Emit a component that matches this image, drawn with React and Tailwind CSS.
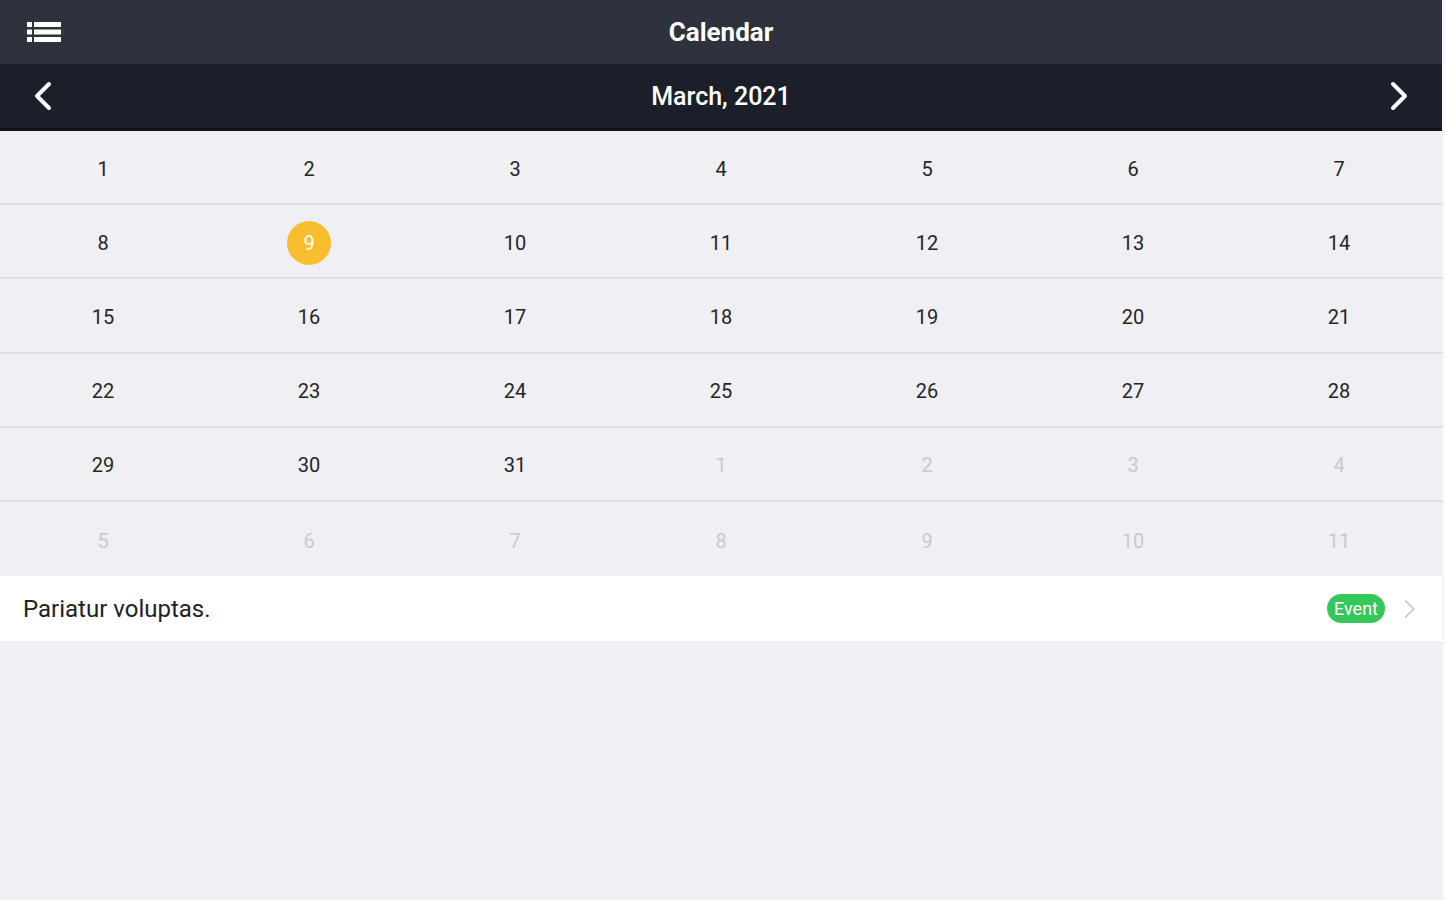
const weeks = [
  [1, 2, 3, 4, 5, 6, 7],
  [8, 9, 10, 11, 12, 13, 14],
  [15, 16, 17, 18, 19, 20, 21],
  [22, 23, 24, 25, 26, 27, 28],
  [29, 30, 31, "n1", "n2", "n3", "n4"],
  ["n5", "n6", "n7", "n8", "n9", "n10", "n11"],
];

const SELECTED = 9;

const MenuIcon = () => (
  <svg width="34" height="24" viewBox="0 0 34 24" fill="#fff">
    <rect x="0" y="2" width="5" height="5" />
    <rect x="7" y="2" width="27" height="5" />
    <rect x="0" y="9.5" width="5" height="5" />
    <rect x="7" y="9.5" width="27" height="5" />
    <rect x="0" y="17" width="5" height="5" />
    <rect x="7" y="17" width="27" height="5" />
  </svg>
);

const Chevron = ({ dir = "left", color = "#fff", size = 30, stroke = 4 }) => (
  <svg width={size * 0.7} height={size} viewBox="0 0 21 30" fill="none">
    <path
      d={dir === "left" ? "M17 3 L5 15 L17 27" : "M4 3 L16 15 L4 27"}
      stroke={color}
      strokeWidth={stroke}
      strokeLinecap="round"
      strokeLinejoin="round"
    />
  </svg>
);

const DayCell = ({ value }) => {
  const isNext = typeof value === "string";
  const label = isNext ? value.slice(1) : value;
  const selected = value === SELECTED;
  return (
    <div className="flex items-center justify-center pt-[3px]">
      {selected ? (
        <span className="flex h-[44px] w-[44px] items-center justify-center rounded-full bg-[#f7bf2e] text-[20px] text-white">
          {label}
        </span>
      ) : (
        <span
          className={`text-[20px] ${isNext ? "text-[#c9c9ce]" : "text-[#262626]"}`}
        >
          {label}
        </span>
      )}
    </div>
  );
};

export default function App() {
  return (
    <div
      className="flex min-h-[900px] bg-[#f7f7f9]"
      style={{ fontFamily: "Roboto, 'Liberation Sans', sans-serif" }}
    >
      <div className="flex w-[1442px] flex-col bg-[#efeff4]">
        {/* Title bar */}
        <header className="flex h-[64px] items-center bg-[#2e323c] px-[27px]">
          <div className="w-[60px]">
            <MenuIcon />
          </div>
          <h1 className="flex-1 text-center text-[26px] font-bold text-white">
            Calendar
          </h1>
          <div className="w-[60px]" />
        </header>

        {/* Month bar */}
        <div className="flex h-[67px] items-center border-b-[3px] border-[#11141b] bg-[#1b1f29] pl-[32px] pr-[32px]">
          <button className="w-[60px]">
            <Chevron dir="left" />
          </button>
          <div className="flex-1 pt-[2px] text-center text-[25px] font-medium text-white">
            March, 2021
          </div>
          <button className="flex w-[60px] justify-end">
            <Chevron dir="right" />
          </button>
        </div>

        {/* Month grid */}
        <div className="flex flex-col">
          {weeks.map((week, i) => (
            <div
              key={i}
              className={`grid h-[74.2px] grid-cols-7 ${
                i < weeks.length - 1 ? "border-b-2 border-[#e0e0e4]" : ""
              }`}
            >
              {week.map((d) => (
                <DayCell key={d} value={d} />
              ))}
            </div>
          ))}
        </div>

        {/* Event list */}
        <div className="flex h-[65px] items-center bg-white pl-[23px] pr-[25px]">
          <span className="flex-1 text-[24px] text-[#222]">
            Pariatur voluptas.
          </span>
          <span className="mr-[18px] rounded-full bg-[#34c759] px-[7px] py-[2px] text-[18px] leading-[25px] text-white">
            Event
          </span>
          <Chevron dir="right" color="#c4c4c8" size={20} stroke={2.5} />
        </div>
      </div>
    </div>
  );
}
